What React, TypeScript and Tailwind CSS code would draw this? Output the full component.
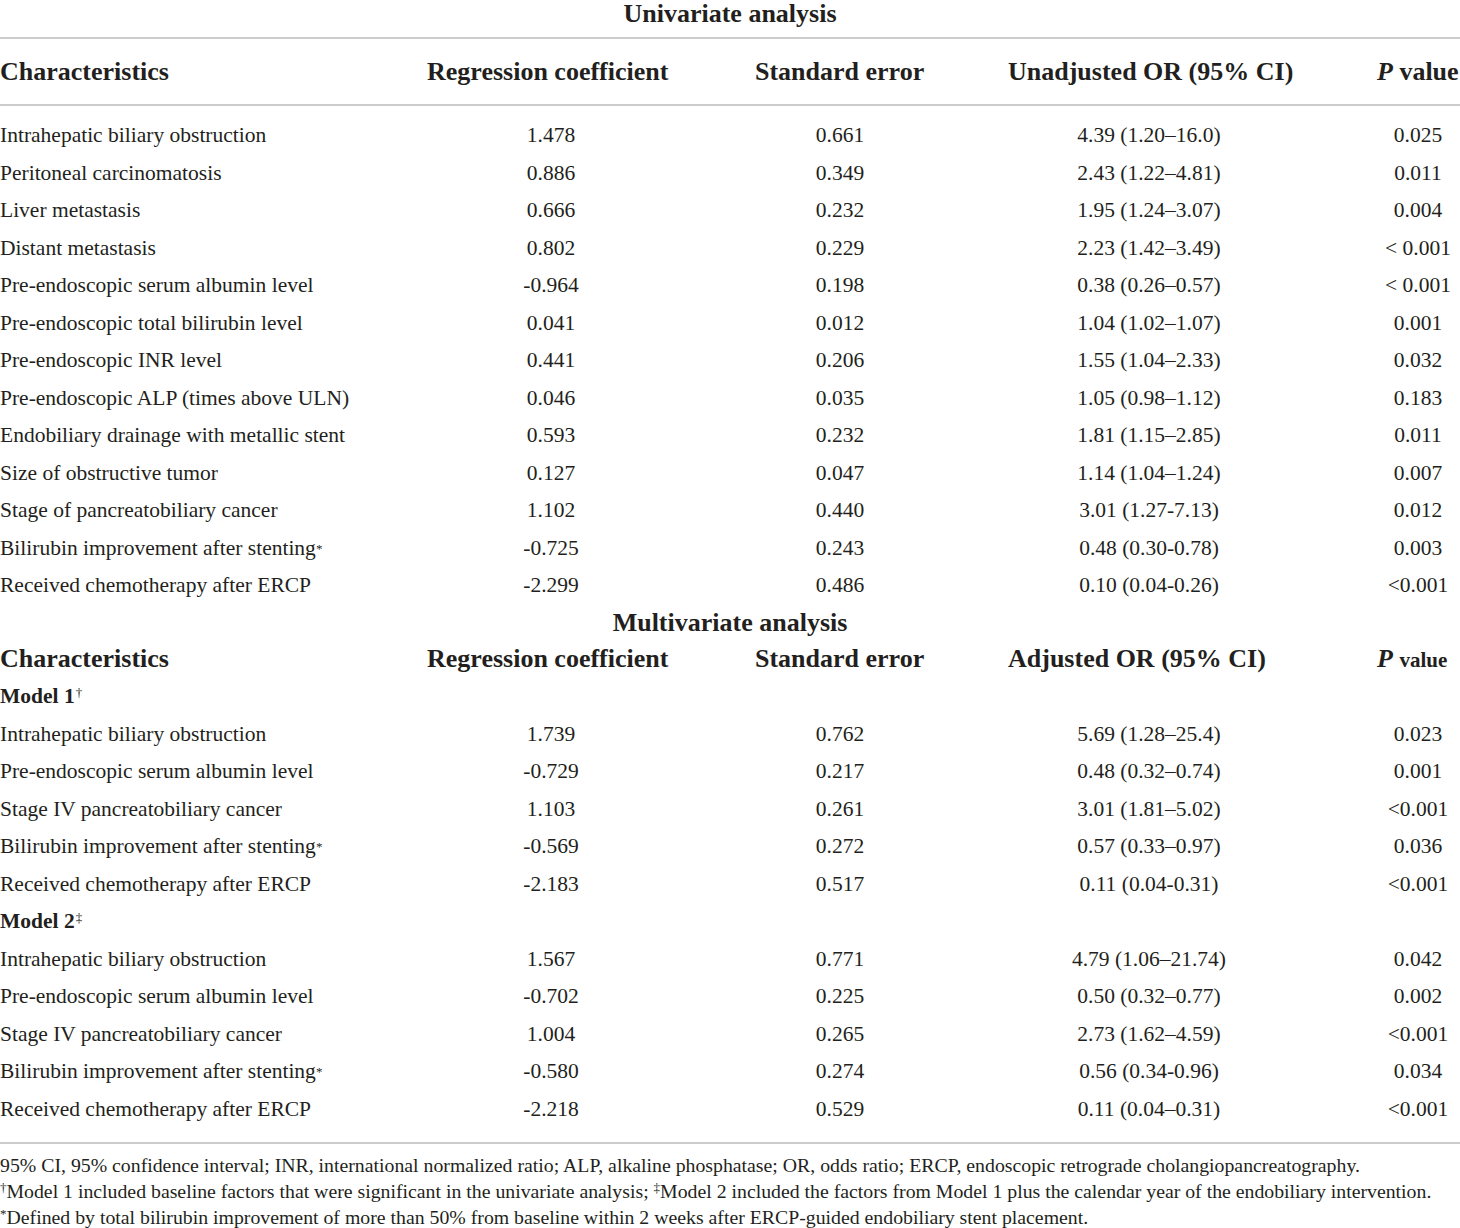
import { ReactNode } from 'react';

type Row = [ReactNode, string, string, string, string];

const star = <sup className="text-[13px] relative -top-[2px]">*</sup>;

const univariate: Row[] = [
  ['Intrahepatic biliary obstruction', '1.478', '0.661', '4.39 (1.20–16.0)', '0.025'],
  ['Peritoneal carcinomatosis', '0.886', '0.349', '2.43 (1.22–4.81)', '0.011'],
  ['Liver metastasis', '0.666', '0.232', '1.95 (1.24–3.07)', '0.004'],
  ['Distant metastasis', '0.802', '0.229', '2.23 (1.42–3.49)', '< 0.001'],
  ['Pre-endoscopic serum albumin level', '-0.964', '0.198', '0.38 (0.26–0.57)', '< 0.001'],
  ['Pre-endoscopic total bilirubin level', '0.041', '0.012', '1.04 (1.02–1.07)', '0.001'],
  ['Pre-endoscopic INR level', '0.441', '0.206', '1.55 (1.04–2.33)', '0.032'],
  ['Pre-endoscopic ALP (times above ULN)', '0.046', '0.035', '1.05 (0.98–1.12)', '0.183'],
  ['Endobiliary drainage with metallic stent', '0.593', '0.232', '1.81 (1.15–2.85)', '0.011'],
  ['Size of obstructive tumor', '0.127', '0.047', '1.14 (1.04–1.24)', '0.007'],
  ['Stage of pancreatobiliary cancer', '1.102', '0.440', '3.01 (1.27-7.13)', '0.012'],
  [<>Bilirubin improvement after stenting{star}</>, '-0.725', '0.243', '0.48 (0.30-0.78)', '0.003'],
  ['Received chemotherapy after ERCP', '-2.299', '0.486', '0.10 (0.04-0.26)', '<0.001'],
];

const model1: Row[] = [
  ['Intrahepatic biliary obstruction', '1.739', '0.762', '5.69 (1.28–25.4)', '0.023'],
  ['Pre-endoscopic serum albumin level', '-0.729', '0.217', '0.48 (0.32–0.74)', '0.001'],
  ['Stage IV pancreatobiliary cancer', '1.103', '0.261', '3.01 (1.81–5.02)', '<0.001'],
  [<>Bilirubin improvement after stenting{star}</>, '-0.569', '0.272', '0.57 (0.33–0.97)', '0.036'],
  ['Received chemotherapy after ERCP', '-2.183', '0.517', '0.11 (0.04-0.31)', '<0.001'],
];

const model2: Row[] = [
  ['Intrahepatic biliary obstruction', '1.567', '0.771', '4.79 (1.06–21.74)', '0.042'],
  ['Pre-endoscopic serum albumin level', '-0.702', '0.225', '0.50 (0.32–0.77)', '0.002'],
  ['Stage IV pancreatobiliary cancer', '1.004', '0.265', '2.73 (1.62–4.59)', '<0.001'],
  [<>Bilirubin improvement after stenting{star}</>, '-0.580', '0.274', '0.56 (0.34-0.96)', '0.034'],
  ['Received chemotherapy after ERCP', '-2.218', '0.529', '0.11 (0.04–0.31)', '<0.001'],
];

function Rule() {
  return <div className="h-[2px] bg-[#cccccc]" />;
}

function DataRow({ row }: { row: Row }) {
  return (
    <div className="grid grid-cols-[420px_262px_316px_302px_1fr] h-[37.5px] items-center">
      <div className="whitespace-nowrap">{row[0]}</div>
      <div className="text-center">{row[1]}</div>
      <div className="text-center">{row[2]}</div>
      <div className="text-center whitespace-nowrap">{row[3]}</div>
      <div className="pl-[76px] text-center whitespace-nowrap">{row[4]}</div>
    </div>
  );
}

function HeaderRow({ orLabel, small }: { orLabel: string; small?: boolean }) {
  return (
    <div className="grid grid-cols-[427px_328px_253px_369px_1fr] items-center text-[26px] font-bold whitespace-nowrap">
      <div>Characteristics</div>
      <div>Regression coefficient</div>
      <div>Standard error</div>
      <div>{orLabel}</div>
      <div>
        <span className="italic">P</span>{' '}
        <span className={small ? 'text-[21px]' : ''}>value</span>
      </div>
    </div>
  );
}

function ModelRow({ label, mark }: { label: string; mark: string }) {
  return (
    <div className="h-[37.5px] flex items-center font-bold">
      {label}
      <sup className="text-[13px] font-normal relative -top-[4px] ml-[1px]">{mark}</sup>
    </div>
  );
}

export default function App() {
  return (
    <div className="w-[1460px] bg-white text-[#231f20] font-['Liberation_Serif','Times_New_Roman',serif] text-[21.5px] leading-none">
      {/* Univariate */}
      <div className="h-[37px] text-center text-[26px] font-bold leading-[27px]">Univariate analysis</div>
      <Rule />
      <div className="h-[65px] flex items-center">
        <div className="w-full">
          <HeaderRow orLabel="Unadjusted OR (95% CI)" />
        </div>
      </div>
      <Rule />
      <div className="pt-[11px]">
        {univariate.map((row, i) => (
          <DataRow key={i} row={row} />
        ))}
      </div>

      {/* Multivariate */}
      <div className="h-[36px] flex items-center justify-center text-[26px] font-bold">Multivariate analysis</div>
      <div className="h-[37.5px] flex items-center">
        <div className="w-full">
          <HeaderRow orLabel="Adjusted OR (95% CI)" small />
        </div>
      </div>
      <ModelRow label="Model 1" mark="†" />
      {model1.map((row, i) => (
        <DataRow key={i} row={row} />
      ))}
      <ModelRow label="Model 2" mark="‡" />
      {model2.map((row, i) => (
        <DataRow key={i} row={row} />
      ))}

      <div className="mt-[14px]">
        <Rule />
      </div>
      <div className="pt-[8px] text-[19.8px] leading-[26px] whitespace-nowrap">
        <p>
          95% CI, 95% confidence interval; INR, international normalized ratio; ALP, alkaline phosphatase; OR, odds ratio;
          ERCP, endoscopic retrograde cholangiopancreatography.
        </p>
        <p>
          <sup className="text-[13px]">†</sup>Model 1 included baseline factors that were significant in the univariate
          analysis; <sup className="text-[13px]">‡</sup>Model 2 included the factors from Model 1 plus the calendar year of
          the endobiliary intervention.
        </p>
        <p>
          <sup className="text-[13px]">*</sup>Defined by total bilirubin improvement of more than 50% from baseline within 2
          weeks after ERCP-guided endobiliary stent placement.
        </p>
      </div>
    </div>
  );
}
